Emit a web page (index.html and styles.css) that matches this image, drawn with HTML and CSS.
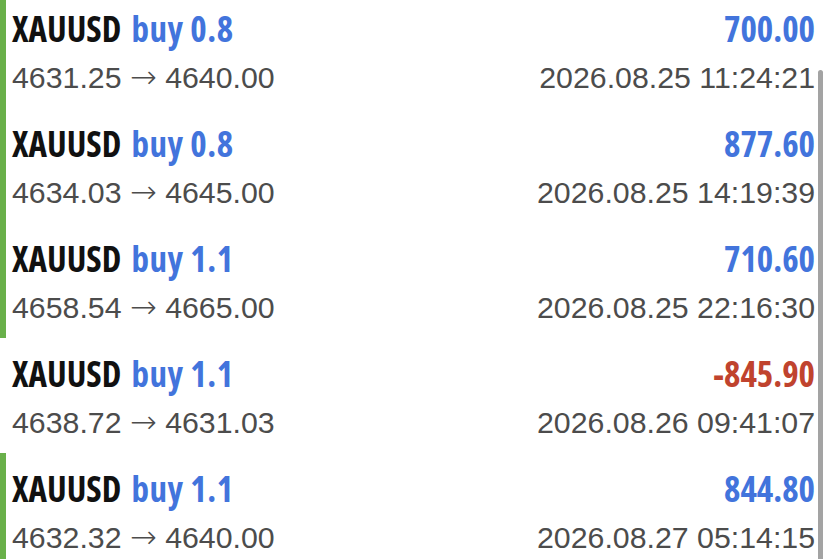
FILE: index.html
```html
<!DOCTYPE html>
<html>
<head>
<meta charset="utf-8">
<link rel="stylesheet" href="styles.css">
</head>
<body>
<div class="viewport">
  <ul class="trades">
    <li class="trade win">
      <div class="line top"><span class="title"><span class="sym">XAUUSD</span> <span class="side">buy 0.8</span></span><span class="pnl">700.00</span></div>
      <div class="line sub"><span class="prices">4631.25 <span class="arrow">→</span> 4640.00</span><span class="time">2026.08.25 11:24:21</span></div>
    </li>
    <li class="trade win">
      <div class="line top"><span class="title"><span class="sym">XAUUSD</span> <span class="side">buy 0.8</span></span><span class="pnl">877.60</span></div>
      <div class="line sub"><span class="prices">4634.03 <span class="arrow">→</span> 4645.00</span><span class="time">2026.08.25 14:19:39</span></div>
    </li>
    <li class="trade win">
      <div class="line top"><span class="title"><span class="sym">XAUUSD</span> <span class="side">buy 1.1</span></span><span class="pnl">710.60</span></div>
      <div class="line sub"><span class="prices">4658.54 <span class="arrow">→</span> 4665.00</span><span class="time">2026.08.25 22:16:30</span></div>
    </li>
    <li class="trade loss">
      <div class="line top"><span class="title"><span class="sym">XAUUSD</span> <span class="side">buy 1.1</span></span><span class="pnl neg">-845.90</span></div>
      <div class="line sub"><span class="prices">4638.72 <span class="arrow">→</span> 4631.03</span><span class="time">2026.08.26 09:41:07</span></div>
    </li>
    <li class="trade win">
      <div class="line top"><span class="title"><span class="sym">XAUUSD</span> <span class="side">buy 1.1</span></span><span class="pnl">844.80</span></div>
      <div class="line sub"><span class="prices">4632.32 <span class="arrow">→</span> 4640.00</span><span class="time">2026.08.27 05:14:15</span></div>
    </li>
  </ul>
  <div class="scrollbar"></div>
</div>
</body>
</html>
```

FILE: styles.css
```css
* { box-sizing: border-box; }
html, body {
  margin: 0;
  padding: 0;
  background: #ffffff;
  width: 829px;
  height: 559px;
  overflow: hidden;
}
.viewport {
  position: relative;
  width: 829px;
  height: 559px;
  overflow: hidden;
}
.trades {
  list-style: none;
  margin: -7px 0 0 0;
  padding: 0;
}
.trade {
  height: 115px;
  padding: 16px 14px 0 6px;
  border-left: 6px solid transparent;
  display: flex;
  flex-direction: column;
}
.trade.win { border-left-color: #69b04a; }
.trade .line {
  display: flex;
  justify-content: space-between;
  align-items: baseline;
}
.trade .top {
  height: 40px;
  line-height: 40px;
}
.trade .sub {
  margin-top: 11px;
  height: 34px;
  line-height: 34px;
}
.title {
  font-family: "Open Sans", sans-serif;
  font-stretch: 75%;
  font-weight: 700;
  font-size: 35px;
  white-space: nowrap;
}
.sym {
  color: #111111;
}
.side {
  color: #4274dc;
  margin-left: 4px;
  letter-spacing: 0.5px;
}
.pnl {
  font-family: "Open Sans", sans-serif;
  font-stretch: 83%;
  font-weight: 700;
  font-size: 35px;
  color: #4274dc;
}
.pnl.neg { color: #c0432e; }
.prices {
  font-family: "Liberation Sans", Arial, sans-serif;
  font-size: 30.3px;
  color: #4c4c4c;
}
.arrow {
  font-family: "DejaVu Sans", sans-serif;
  font-weight: 200;
  font-size: 32px;
}
.time {
  font-family: "Liberation Sans", Arial, sans-serif;
  font-size: 30.3px;
  color: #4c4c4c;
}
.scrollbar {
  position: absolute;
  left: 818px;
  top: 70px;
  width: 5px;
  bottom: -10px;
  border-radius: 3px;
  background: #a3a3a3;
}
```
